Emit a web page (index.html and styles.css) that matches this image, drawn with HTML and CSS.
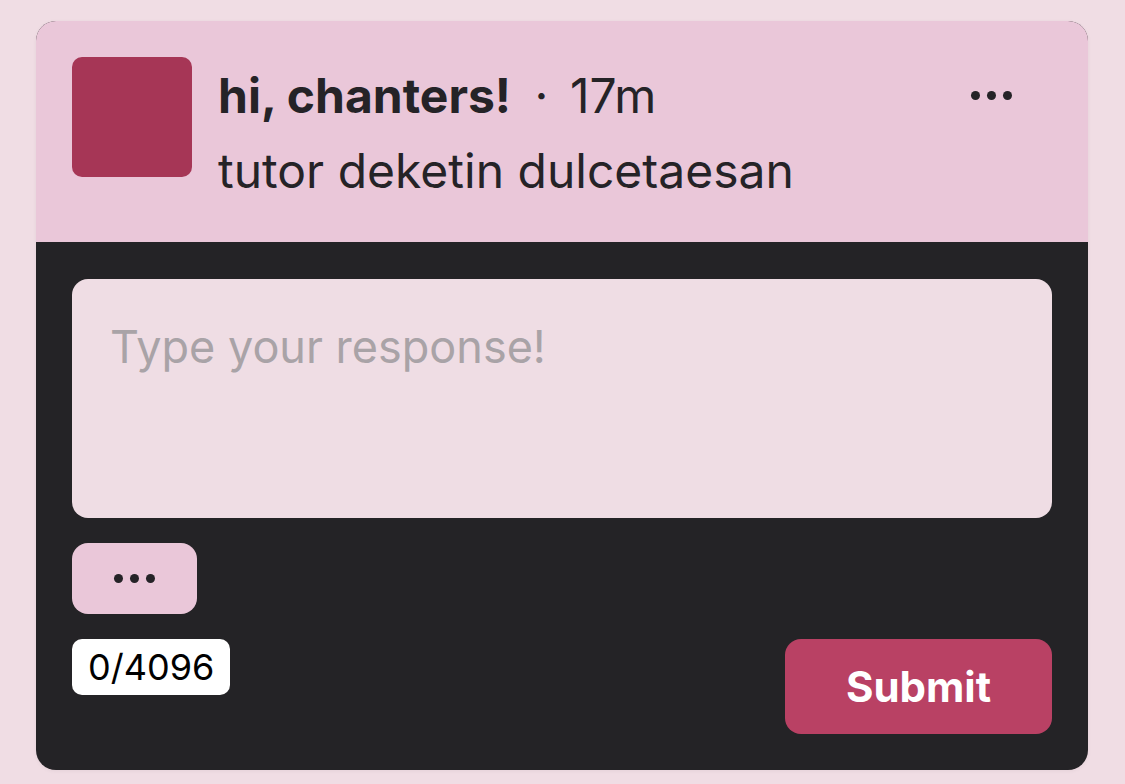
FILE: index.html
```html
<!DOCTYPE html>
<html lang="en">
<head>
    <meta charset="UTF-8">
    <meta name="viewport" content="width=device-width, initial-scale=1.0">
    <title>Prompt</title>
    <link rel="stylesheet" href="styles.css">
</head>
<body>
    <div class="card">
        <div class="card-header">
            <div class="avatar"></div>
            <div class="meta">
                <div class="title-line">
                    <span class="name">hi, chanters!</span>
                    <span class="sep">&middot;</span>
                    <span class="time">17m</span>
                </div>
                <div class="subtitle">tutor deketin dulcetaesan</div>
            </div>
            <button class="menu-btn" aria-label="More">
                <span class="dot"></span><span class="dot"></span><span class="dot"></span>
            </button>
        </div>

        <div class="card-body">
            <textarea class="response" placeholder="Type your response!"></textarea>
            <button class="more-btn" aria-label="More options">
                <span class="dot"></span><span class="dot"></span><span class="dot"></span>
            </button>
            <div class="footer">
                <span class="counter">0/4096</span>
                <button class="submit">Submit</button>
            </div>
        </div>
    </div>
</body>
</html>
```

FILE: styles.css
```css
* {
    box-sizing: border-box;
}

body {
    margin: 0;
    padding: 21px 37px 14px 36px;
    background-color: #f0dde4;
    font-family: Inter, "Noto Sans", sans-serif;
    color: #252327;
}

.card {
    border-radius: 20px;
    overflow: hidden;
    background-color: #242326;
    box-shadow: 0 1px 4px rgba(0, 0, 0, 0.05);
}

.card-header {
    display: flex;
    align-items: flex-start;
    background-color: #eac7d9;
    padding: 36px 36px 0 36px;
    height: 221px;
}

.avatar {
    width: 120px;
    height: 120px;
    border-radius: 10px;
    background-color: #a63656;
    flex-shrink: 0;
}

.meta {
    flex: 1;
    margin-left: 26px;
    font-size: 48px;
    line-height: 75px;
    margin-top: 1px;
    white-space: nowrap;
}

.name {
    font-weight: 700;
}

.sep {
    margin: 0 8px 0 10px;
}

.menu-btn,
.more-btn {
    border: none;
    background: none;
    padding: 0;
    display: flex;
    align-items: center;
    justify-content: center;
    gap: 7px;
    cursor: pointer;
}

.menu-btn {
    width: 50px;
    height: 30px;
    margin: 23px 36px 0 0;
}

.dot {
    width: 9px;
    height: 9px;
    border-radius: 50%;
    background-color: #252327;
}

.card-body {
    padding: 37px 36px 36px 36px;
    display: flex;
    flex-direction: column;
}

.response {
    width: 100%;
    height: 239px;
    border: none;
    border-radius: 16px;
    background-color: #efdde4;
    padding: 40px 38px;
    font-family: Inter, "Noto Sans", sans-serif;
    font-size: 45px;
    color: #252327;
    resize: none;
    outline: none;
}

.response::placeholder {
    color: #a9a3a7;
}

.more-btn {
    margin-top: 25px;
    width: 125px;
    height: 71px;
    border-radius: 16px;
    background-color: #eac7d9;
}

.footer {
    margin-top: 25px;
    display: flex;
    justify-content: space-between;
    align-items: flex-start;
}

.counter {
    background-color: #fff;
    color: #000;
    border-radius: 10px;
    padding: 0 16px;
    height: 56px;
    line-height: 56px;
    font-size: 36px;
}

.submit {
    width: 267px;
    height: 95px;
    border: none;
    border-radius: 16px;
    background-color: #b94164;
    color: #fff;
    font-family: Inter, "Noto Sans", sans-serif;
    font-size: 42px;
    font-weight: 700;
    cursor: pointer;
}
```
